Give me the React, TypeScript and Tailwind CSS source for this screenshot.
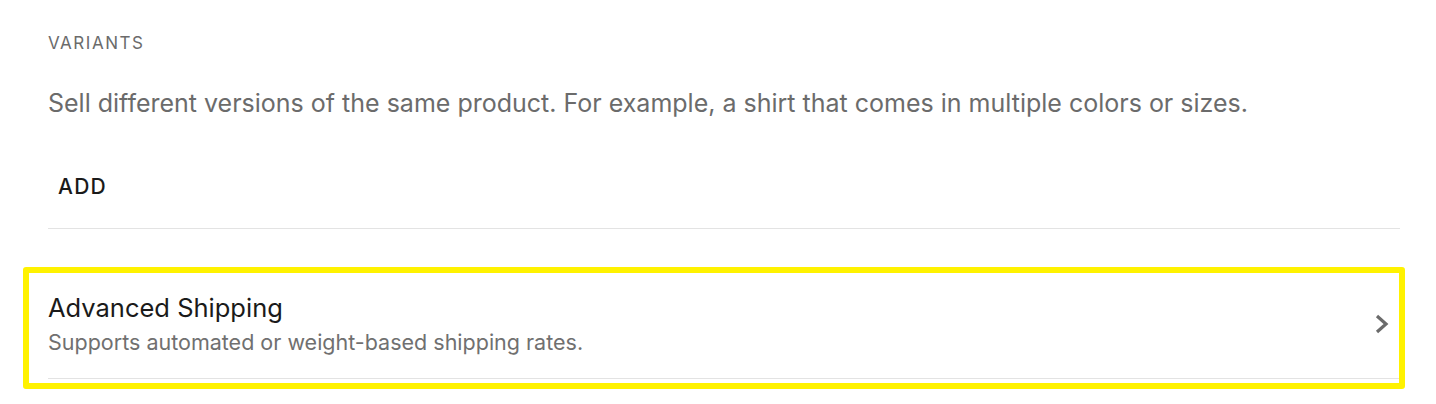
export default function App() {
  return (
    <div className="w-[1436px] h-[404px] bg-white pl-12 pr-9 pt-[33px] font-['Inter',sans-serif] overflow-hidden">
      <div className="text-[17px] tracking-[0.09em] uppercase text-[#6b6b6b] leading-[20px]">Variants</div>
      <p className="mt-[34px] text-[25px] leading-[32px] text-[#6b6b6b]">
        Sell different versions of the same product. For example, a shirt that comes in multiple colors or sizes.
      </p>
      <div className="mt-[55px] pb-[28px] border-b border-[#e3e3e3]">
        <button className="px-[10px] text-[21px] font-medium tracking-[0.06em] uppercase text-[#1a1a1a] leading-[26px]">Add</button>
      </div>
      <div className="mt-[38px] -ml-[25px] -mr-[5px] border-[6px] border-[#fff200] rounded-[3px] pl-[19px] pb-[4px]">
        <div className="flex items-center border-b border-[#e3e3e3] pt-[19px] pb-[22px]">
          <div className="flex-1">
            <div className="text-[25.5px] leading-[32px] text-[#1a1a1a]">Advanced Shipping</div>
            <div className="mt-[4px] text-[21.5px] leading-[28px] text-[#707070]">Supports automated or weight-based shipping rates.</div>
          </div>
          <svg width="16" height="20" viewBox="0 0 16 20" className="mr-[9px]" fill="none">
            <path d="M3 2 L12 10 L3 18" stroke="#6b6b6b" strokeWidth="3.2" />
          </svg>
        </div>
      </div>
    </div>
  );
}
